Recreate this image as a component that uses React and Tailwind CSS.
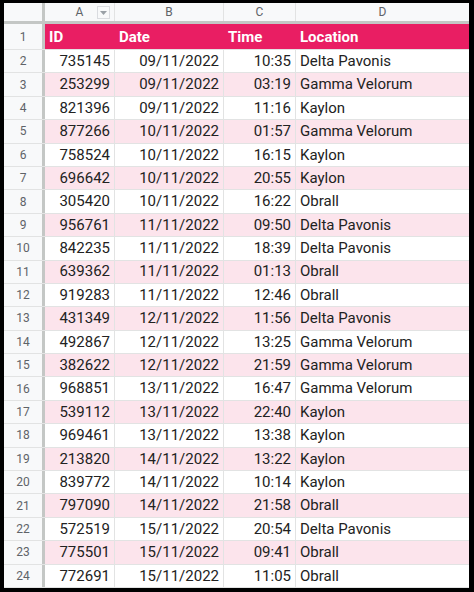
const rows = [
    ["735145", "09/11/2022", "10:35", "Delta Pavonis"],
    ["253299", "09/11/2022", "03:19", "Gamma Velorum"],
    ["821396", "09/11/2022", "11:16", "Kaylon"],
    ["877266", "10/11/2022", "01:57", "Gamma Velorum"],
    ["758524", "10/11/2022", "16:15", "Kaylon"],
    ["696642", "10/11/2022", "20:55", "Kaylon"],
    ["305420", "10/11/2022", "16:22", "Obrall"],
    ["956761", "11/11/2022", "09:50", "Delta Pavonis"],
    ["842235", "11/11/2022", "18:39", "Delta Pavonis"],
    ["639362", "11/11/2022", "01:13", "Obrall"],
    ["919283", "11/11/2022", "12:46", "Obrall"],
    ["431349", "12/11/2022", "11:56", "Delta Pavonis"],
    ["492867", "12/11/2022", "13:25", "Gamma Velorum"],
    ["382622", "12/11/2022", "21:59", "Gamma Velorum"],
    ["968851", "13/11/2022", "16:47", "Gamma Velorum"],
    ["539112", "13/11/2022", "22:40", "Kaylon"],
    ["969461", "13/11/2022", "13:38", "Kaylon"],
    ["213820", "14/11/2022", "13:22", "Kaylon"],
    ["839772", "14/11/2022", "10:14", "Kaylon"],
    ["797090", "14/11/2022", "21:58", "Obrall"],
    ["572519", "15/11/2022", "20:54", "Delta Pavonis"],
    ["775501", "15/11/2022", "09:41", "Obrall"],
    ["772691", "15/11/2022", "11:05", "Obrall"],
];

// colonne des numéros de ligne
const rowNum = "w-[41px] shrink-0 border-r-[3px] border-[#c4c7c5] bg-[#f8f9fa] flex items-center justify-center text-[12px] text-[#5f6368]";

const App = () => {
    return (
        <div className="w-[474px] h-[592px] bg-black pt-[3px] pl-[4px] pr-[5px] pb-[4px] overflow-hidden" style={{ fontFamily: "Roboto, 'Liberation Sans', sans-serif" }}>
            <div className="w-[465px] h-[585px] bg-white flex flex-col overflow-hidden">
                {/* En-tête des colonnes A B C D */}
                <div className="flex h-[21px] shrink-0 border-b-[3px] border-[#c4c7c5] bg-[#f8f9fa] text-[12px] text-[#5f6368]">
                    <div className="w-[41px] shrink-0 border-r-[3px] border-[#c4c7c5]"></div>
                    <div className="w-[70px] shrink-0 border-r border-[#e2e3e3] relative flex items-center justify-center">
                        A
                        <span className="absolute right-[4px] top-[3px] w-[13px] h-[13px] border border-[#dadce0] flex items-center justify-center">
                            <svg width="7" height="4" viewBox="0 0 7 4"><path d="M0 0h7L3.5 4z" fill="#9aa0a6" /></svg>
                        </span>
                    </div>
                    <div className="w-[109px] shrink-0 border-r border-[#e2e3e3] flex items-center justify-center">B</div>
                    <div className="w-[72px] shrink-0 border-r border-[#e2e3e3] flex items-center justify-center">C</div>
                    <div className="flex-1 flex items-center justify-center">D</div>
                </div>

                {/* Ligne 1 : titres */}
                <div className="flex h-[26px] shrink-0 border-b border-[#e2e3e3]">
                    <div className={rowNum}>1</div>
                    <div className="flex flex-1 bg-[#e91e63] text-white font-bold text-[15px] items-center pt-[1px]">
                        <div className="w-[70px] shrink-0 pl-[4px]">ID</div>
                        <div className="w-[109px] shrink-0 pl-[4px]">Date</div>
                        <div className="w-[72px] shrink-0 pl-[4px]">Time</div>
                        <div className="flex-1 pl-[4px]">Location</div>
                    </div>
                </div>

                {rows.map((r, i) => (
                    <div key={i} className="flex h-[23.4px] shrink-0 border-b border-[#e2e3e3]">
                        <div className={rowNum}>{i + 2}</div>
                        <div className={`flex flex-1 text-[15px] text-[#222] ${i % 2 === 1 ? "bg-[#fce4ec]" : "bg-white"}`}>
                            <div className="w-[70px] shrink-0 border-r border-[#e2e3e3] flex items-center justify-end pr-[4px]">{r[0]}</div>
                            <div className="w-[109px] shrink-0 border-r border-[#e2e3e3] flex items-center justify-end pr-[4px]">{r[1]}</div>
                            <div className="w-[72px] shrink-0 border-r border-[#e2e3e3] flex items-center justify-end pr-[4px]">{r[2]}</div>
                            <div className="flex-1 flex items-center pl-[4px]">{r[3]}</div>
                        </div>
                    </div>
                ))}
            </div>
        </div>
    );
};

export default App;
